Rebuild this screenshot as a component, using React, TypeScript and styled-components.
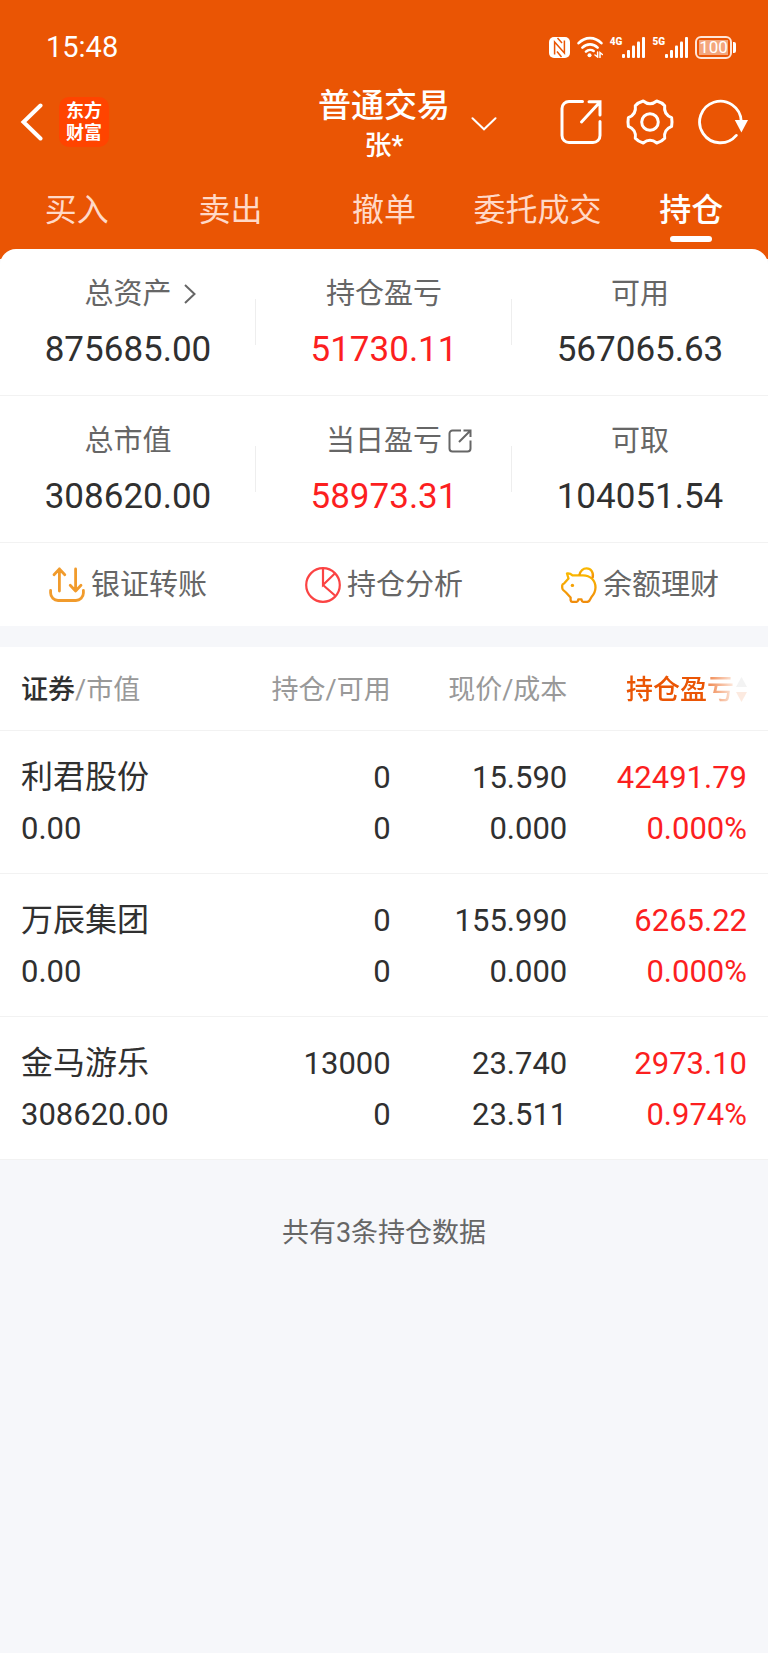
import React from "react";
import styled, { createGlobalStyle } from "styled-components";

const color = {
  brand: "#ea5504",
  logo: "#ff4400",
  text: "#303030",
  label: "#666666",
  muted: "#999999",
  rise: "#fc1f1f",
  line: "#f2f2f2",
  page: "#f6f7fa",
};

const GlobalStyle = createGlobalStyle`
  *, *::before, *::after { box-sizing: border-box; }
  body {
    margin: 0;
    background: ${color.page};
    color: ${color.text};
    font-family: Roboto, "Noto Sans CJK SC", sans-serif;
  }
  button {
    border: 0;
    margin: 0;
    padding: 0;
    background: none;
    color: inherit;
    font: inherit;
    cursor: pointer;
  }
  svg { display: block; flex: none; }
`;

/* ---------- header ---------- */

const Header = styled.header`
  background: ${color.brand};
  color: #fff;
  padding: 27px 0 10px;
`;

const StatusBar = styled.div`
  display: flex;
  align-items: center;
  justify-content: space-between;
  height: 53px;
  padding: 0 32px 13px 46px;
`;

const Clock = styled.time`
  font-size: 29px;
  line-height: 40px;
`;

const StatusIcons = styled.div`
  display: flex;
  align-items: center;
  gap: 7px;
`;

const Signal = styled.div`
  display: flex;
  align-items: flex-start;
`;

const Network = styled.span`
  font-size: 10px;
  font-weight: 900;
  line-height: 9px;
`;

const Battery = styled.div`
  display: flex;
  align-items: center;
  gap: 1px;
  &::after {
    content: "";
    width: 3px;
    height: 11px;
    border-radius: 0 2px 2px 0;
    background: #fff;
  }
`;

const BatteryLevel = styled.span`
  width: 37px;
  height: 23px;
  border: 2px solid #ffe6d9;
  border-radius: 6px;
  background: linear-gradient(#f4a67c, #f4a67c) center / 29px 15px no-repeat;
  font-size: 17px;
  line-height: 19px;
  text-align: center;
`;

const NavBar = styled.div`
  display: grid;
  grid-template-columns: 1fr auto 1fr;
  align-items: center;
  padding: 0 20px;
`;

const NavSide = styled.div<{ $end?: boolean }>`
  display: flex;
  align-items: center;
  justify-content: ${(p) => (p.$end ? "flex-end" : "flex-start")};
  gap: ${(p) => (p.$end ? "24px" : "15px")};
`;

const Logo = styled.span`
  display: grid;
  place-content: center;
  width: 50px;
  height: 50px;
  border-radius: 10px;
  background: ${color.logo};
  font-size: 18px;
  font-weight: 700;
  line-height: 22px;
`;

const AccountButton = styled.button`
  display: grid;
  grid-template-columns: 26px auto 26px;
  column-gap: 21px;
  align-items: center;
  padding-top: 4px;
`;

const AccountName = styled.span`
  grid-column: 2;
  display: flex;
  flex-direction: column;
`;

const Title = styled.span`
  font-size: 33px;
  font-weight: 500;
  line-height: 44px;
`;

const Holder = styled.span`
  font-size: 27px;
  font-weight: 500;
  line-height: 36px;
`;

const Tabs = styled.nav`
  display: grid;
  grid-template-columns: repeat(5, 1fr);
`;

const Tab = styled.button<{ $active?: boolean }>`
  display: flex;
  flex-direction: column;
  align-items: center;
  gap: 4px;
  padding: 24px 0 7px;
  color: ${(p) => (p.$active ? "#fff" : "#ffd9c8")};
  font-size: 32px;
  font-weight: ${(p) => (p.$active ? 500 : 400)};
  line-height: 44px;
  white-space: nowrap;
  &::after {
    content: "";
    width: 42px;
    height: 6px;
    border-radius: 3px;
    background: ${(p) => (p.$active ? "#fff" : "transparent")};
  }
`;

/* ---------- summary card ---------- */

const Card = styled.section`
  margin-top: -10px;
  border-radius: 16px 16px 0 0;
  background: #fff;
`;

const SummaryRow = styled.div`
  display: grid;
  grid-template-columns: repeat(3, 1fr);
  border-bottom: 1px solid ${color.line};
`;

const SummaryCell = styled.div`
  display: flex;
  flex-direction: column;
  gap: 12px;
  padding: 25px 0 21px;
  background: linear-gradient(#eeeeee, #eeeeee) right center / 1px 46px no-repeat;
  &:last-child { background: none; }
`;

const SummaryLabel = styled.span`
  display: grid;
  grid-template-columns: 1fr auto 1fr;
  align-items: center;
  color: ${color.label};
  font-size: 29px;
  line-height: 40px;
  & > span { grid-column: 2; }
`;

const LabelIcon = styled.i<{ $gap: number }>`
  grid-column: 3;
  padding-left: ${(p) => p.$gap}px;
`;

const SummaryValue = styled.strong<{ $rise?: boolean }>`
  color: ${(p) => (p.$rise ? color.rise : color.text)};
  font-size: 35px;
  font-weight: 400;
  line-height: 48px;
  text-align: center;
`;

const Shortcuts = styled.div`
  display: grid;
  grid-template-columns: repeat(3, 1fr);
`;

const Shortcut = styled.button`
  display: flex;
  align-items: center;
  justify-content: center;
  gap: 6px;
  height: 83px;
  color: ${color.label};
  font-size: 29px;
  line-height: 40px;
`;

/* ---------- holdings ---------- */

const Holdings = styled.table`
  width: 100%;
  margin-top: 21px;
  border-collapse: separate;
  border-spacing: 0;
  table-layout: fixed;
  background: #fff;
`;

const Column = styled.col<{ $width: number }>`
  width: ${(p) => p.$width}%;
`;

const HeadCell = styled.th`
  height: 84px;
  padding: 2px 1px 0 0;
  border-bottom: 1px solid ${color.line};
  color: ${color.muted};
  font-size: 27px;
  font-weight: 400;
  line-height: 40px;
  text-align: right;
  white-space: nowrap;
  &:first-child { padding-left: 21px; text-align: left; }
  &:last-child { padding-right: 21px; }
`;

const SortKey = styled.b`
  color: ${color.text};
  font-weight: 500;
`;

const SortButton = styled.button`
  display: inline-flex;
  align-items: center;
  gap: 2px;
  color: ${color.brand};
  font-weight: 500;
  vertical-align: top;
  mask-image: linear-gradient(to right, #000 81px, rgba(0, 0, 0, 0.7) 82px, rgba(0, 0, 0, 0.12) 108px);
`;

const Cell = styled.td<{ $rise?: boolean }>`
  padding: 21px 1px 19px 0;
  border-bottom: 1px solid ${color.line};
  color: ${(p) => (p.$rise ? color.rise : color.text)};
  font-size: 31px;
  line-height: 51px;
  text-align: right;
  white-space: nowrap;
  &:first-child { padding-left: 21px; text-align: left; }
  &:last-child { padding-right: 21px; }
`;

const Line = styled.div<{ $name?: boolean }>`
  font-size: ${(p) => (p.$name ? 32 : 31)}px;
`;

const Footer = styled.p`
  margin: 0;
  padding: 53px 0;
  color: ${color.label};
  font-size: 27px;
  line-height: 40px;
  text-align: center;
`;

/* ---------- icons ---------- */

const NfcIcon = () => (
  <svg width="21" height="21" viewBox="0 0 21 21" fill="none">
    <rect width="21" height="21" rx="5" fill="#fff" />
    <path d="M5.600 17.500V5L15.400 16V3.500" stroke={color.brand} strokeWidth="1.500" />
    <path d="M8.500 1l4.500 5M8 14.500l4.500 5.500" stroke={color.brand} strokeWidth="1.500" />
  </svg>
);

const WifiIcon = () => (
  <svg width="26" height="22" viewBox="0 0 26 22" fill="none" stroke="#fff" strokeWidth="2.600" strokeLinecap="round">
    <path d="M1.600 7.200C8 .4 18 .4 24.400 7.200M5.400 11.600c4.300-4.300 10.900-4.300 15.200 0M9 15.600c2.200-2.100 5.600-2.100 7.600-.6" />
    <circle cx="12.500" cy="19.200" r="2" fill="#fff" stroke="none" />
    <path d="M20.600 16v5l-2.600-2M23 21.500v-5l2.400 2" strokeWidth="1.500" />
  </svg>
);

const BarsIcon = () => (
  <svg width="23" height="21" viewBox="0 0 23 21" fill="#fff">
    <rect x="0" y="17" width="3" height="4" rx="1" />
    <rect x="5" y="13" width="3" height="8" rx="1" />
    <rect x="10" y="8.500" width="3" height="12.500" rx="1" />
    <rect x="15" y="4.500" width="3" height="16.500" rx="1" />
    <rect x="20" y="0" width="3" height="21" rx="1" />
  </svg>
);

const BackIcon = () => (
  <svg width="24" height="38" viewBox="0 0 24 38" fill="none" stroke="#fff" strokeWidth="4" strokeLinecap="round">
    <path d="M20.500 2.500L3.500 19l17 16.500" />
  </svg>
);

const DownIcon = () => (
  <svg width="26" height="14" viewBox="0 0 26 14" fill="none" stroke="#fff" strokeWidth="2" strokeLinecap="round">
    <path d="M1.500 1.300L13 12.300l11.500-11" />
  </svg>
);

const ShareIcon = () => (
  <svg width="42" height="46" viewBox="0 0 42 46" fill="none" stroke="#fff" strokeWidth="3" strokeLinecap="round">
    <path d="M22.500 2.500H9a7 7 0 0 0-7 7v27a7 7 0 0 0 7 7h24a7 7 0 0 0 7-7V22.500" />
    <path d="M21.500 23L39.500 3.500M29 2.700h11V16" />
  </svg>
);

const GearIcon = () => (
  <svg width="48" height="46" viewBox="-24 -23 48 46" fill="none" stroke="#fff" strokeWidth="3" strokeLinejoin="round">
    <path d="M21.600 4.400Q13.400 7.700 14.700 16.300Q12 19.500 6.800 21Q0 15.500-6.800 21Q-12 19.500-14.700 16.300Q-13.400 7.700-21.600 4.400Q-22.400 0-21.600-4.400Q-13.400-7.700-14.700-16.300Q-12-19.500-6.800-21Q0-15.500 6.800-21Q12-19.500 14.700-16.300Q13.400-7.700 21.600-4.400Q22.400 0 21.600 4.400Z" />
    <circle r="8.300" />
  </svg>
);

const RefreshIcon = () => (
  <svg width="50" height="46" viewBox="0 0 50 46" fill="none">
    <path d="M43.200 22A20.800 20.800 0 1 0 38.300 36.400" stroke="#fff" strokeWidth="2.800" strokeLinecap="round" />
    <path d="M36.800 21H50l-6.600 12.500z" fill="#fff" />
  </svg>
);

const RightIcon = () => (
  <svg width="12" height="20" viewBox="0 0 12 20" fill="none" stroke={color.label} strokeWidth="2">
    <path d="M1 1l9.500 9L1 19" />
  </svg>
);

const ExternalIcon = () => (
  <svg width="24" height="24" viewBox="0 0 24 24" fill="none" stroke={color.label} strokeWidth="2">
    <path d="M13 1.500H4.500a3 3 0 0 0-3 3v15a3 3 0 0 0 3 3h15a3 3 0 0 0 3-3V11.500M11 13L22.500 1.500M15.500 1.500h7V8" />
  </svg>
);

const TransferIcon = () => (
  <svg width="36" height="36" viewBox="0 0 36 36" fill="none" stroke="#f19b2c" strokeWidth="2.800" strokeLinecap="round" strokeLinejoin="round">
    <path d="M10.400 24V2M5 7.700L10.400 2l5.400 5.700M26.600 2v22M21.200 18.300l5.400 5.700 5.400-5.700" />
    <path d="M1.600 23.500V26a7.500 7.500 0 0 0 7.500 7.500h17.800a7.500 7.500 0 0 0 7.500-7.500v-2.500" />
  </svg>
);

const PieIcon = () => (
  <svg width="36" height="36" viewBox="0 0 36 36" fill="none" stroke="#fb4343" strokeWidth="2.200">
    <circle cx="18" cy="18" r="16.800" />
    <path d="M18 1.500V18L29.800 6.500M18 18l12 10.500" />
  </svg>
);

const PiggyIcon = () => (
  <svg width="36" height="36" viewBox="0 0 36 36" fill="none">
    <defs>
      <linearGradient id="piggy" x1="0" y1="0" x2="0" y2="1">
        <stop offset="0" stopColor="#fab800" />
        <stop offset="1" stopColor="#f08c0c" />
      </linearGradient>
    </defs>
    <g stroke="url(#piggy)" strokeWidth="2.300" strokeLinejoin="round">
      <path d="M6 6.500Q9 6 11.500 8.300H22C29.500 8.300 34.500 13.500 34.500 20.500Q34.300 26 30.500 30L28.500 33.500Q27.500 35 25.500 34.900H22.500Q20.800 34.800 20.500 32.300H17.300Q17 34.800 15.300 34.900H11.500Q9.800 34.800 9.600 33V30.500L5 25.500L2.200 23Q1.200 22 1.200 20.500V18.500Q1.400 17 3 16.500L7.500 11.500Z" />
      <path d="M18.300 8.200C19.500 3.800 22 1.400 25.500 1.400C30 1.400 33 5.500 31.600 11" />
    </g>
    <circle cx="11.400" cy="18.400" r="1.700" fill="#f5a205" />
  </svg>
);

const SortIcon = () => (
  <svg width="11" height="26" viewBox="0 0 11 26">
    <path d="M5.500 0L11 10H0z" fill={color.muted} />
    <path d="M5.500 25L11 15H0z" fill={color.brand} />
  </svg>
);

/* ---------- data ---------- */

const tabs = ["买入", "卖出", "撤单", "委托成交", "持仓"];

type Figure = { label: string; value: string; rise?: boolean; icon?: React.ReactNode; gap?: number };

const summary: Figure[][] = [
  [
    { label: "总资产", value: "875685.00", icon: <RightIcon />, gap: 12 },
    { label: "持仓盈亏", value: "51730.11", rise: true },
    { label: "可用", value: "567065.63" },
  ],
  [
    { label: "总市值", value: "308620.00" },
    { label: "当日盈亏", value: "58973.31", rise: true, icon: <ExternalIcon />, gap: 6 },
    { label: "可取", value: "104051.54" },
  ],
];

const shortcuts = [
  { label: "银证转账", icon: <TransferIcon /> },
  { label: "持仓分析", icon: <PieIcon /> },
  { label: "余额理财", icon: <PiggyIcon /> },
];

const holdings = [
  { name: "利君股份", value: "0.00", held: "0", usable: "0", price: "15.590", cost: "0.000", profit: "42491.79", rate: "0.000%" },
  { name: "万辰集团", value: "0.00", held: "0", usable: "0", price: "155.990", cost: "0.000", profit: "6265.22", rate: "0.000%" },
  { name: "金马游乐", value: "308620.00", held: "13000", usable: "0", price: "23.740", cost: "23.511", profit: "2973.10", rate: "0.974%" },
];

export default function App() {
  return (
    <>
      <GlobalStyle />
      <Header>
        <StatusBar>
          <Clock>15:48</Clock>
          <StatusIcons>
            <NfcIcon />
            <WifiIcon />
            {["4G", "5G"].map((network) => (
              <Signal key={network}>
                <Network>{network}</Network>
                <BarsIcon />
              </Signal>
            ))}
            <Battery>
              <BatteryLevel>100</BatteryLevel>
            </Battery>
          </StatusIcons>
        </StatusBar>
        <NavBar>
          <NavSide>
            <button aria-label="返回"><BackIcon /></button>
            <Logo>
              <span>东方</span>
              <span>财富</span>
            </Logo>
          </NavSide>
          <AccountButton>
            <AccountName>
              <Title>普通交易</Title>
              <Holder>张*</Holder>
            </AccountName>
            <DownIcon />
          </AccountButton>
          <NavSide $end>
            <button aria-label="分享"><ShareIcon /></button>
            <button aria-label="设置"><GearIcon /></button>
            <button aria-label="刷新"><RefreshIcon /></button>
          </NavSide>
        </NavBar>
        <Tabs>
          {tabs.map((tab) => (
            <Tab key={tab} $active={tab === "持仓"}>{tab}</Tab>
          ))}
        </Tabs>
      </Header>

      <main>
        <Card>
          {summary.map((row, i) => (
            <SummaryRow key={i}>
              {row.map((item) => (
                <SummaryCell key={item.label}>
                  <SummaryLabel>
                    <span>{item.label}</span>
                    {item.icon && <LabelIcon $gap={item.gap ?? 0}>{item.icon}</LabelIcon>}
                  </SummaryLabel>
                  <SummaryValue $rise={item.rise}>{item.value}</SummaryValue>
                </SummaryCell>
              ))}
            </SummaryRow>
          ))}
          <Shortcuts>
            {shortcuts.map((item) => (
              <Shortcut key={item.label}>
                {item.icon}
                {item.label}
              </Shortcut>
            ))}
          </Shortcuts>
        </Card>

        <Holdings>
          <colgroup>
            <Column $width={27} />
            <Column $width={24} />
            <Column $width={23} />
            <Column $width={26} />
          </colgroup>
          <thead>
            <tr>
              <HeadCell scope="col"><SortKey>证券</SortKey>/市值</HeadCell>
              <HeadCell scope="col">持仓/可用</HeadCell>
              <HeadCell scope="col">现价/成本</HeadCell>
              <HeadCell scope="col">
                <SortButton>持仓盈亏<SortIcon /></SortButton>
              </HeadCell>
            </tr>
          </thead>
          <tbody>
            {holdings.map((row) => (
              <tr key={row.name}>
                <Cell><Line $name>{row.name}</Line><Line>{row.value}</Line></Cell>
                <Cell><Line>{row.held}</Line><Line>{row.usable}</Line></Cell>
                <Cell><Line>{row.price}</Line><Line>{row.cost}</Line></Cell>
                <Cell $rise><Line>{row.profit}</Line><Line>{row.rate}</Line></Cell>
              </tr>
            ))}
          </tbody>
        </Holdings>
        <Footer>共有3条持仓数据</Footer>
      </main>
    </>
  );
}
